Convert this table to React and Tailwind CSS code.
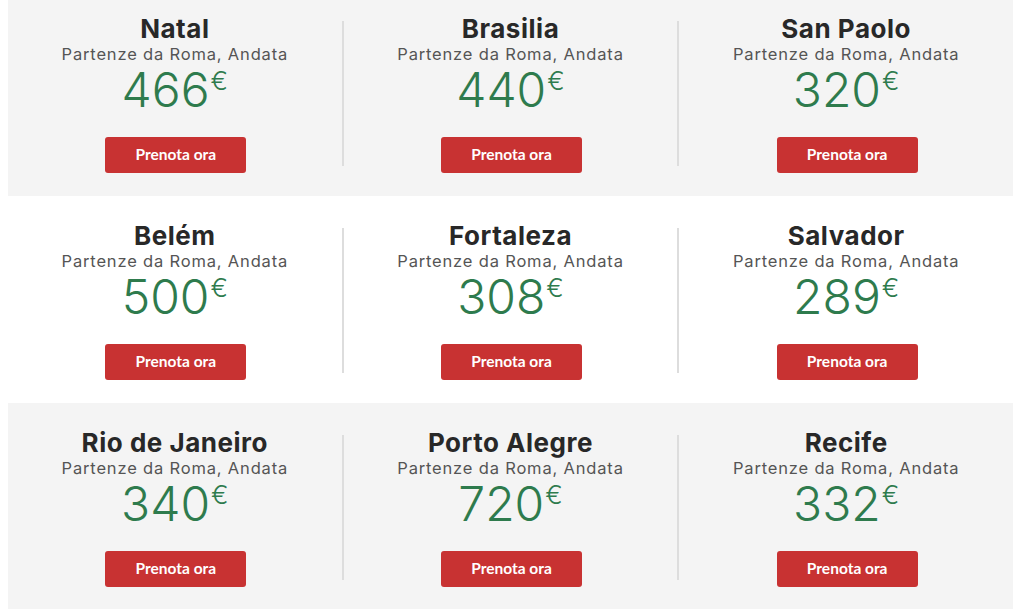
import React from 'react';

const rows = [
  { shade: true, items: [['Natal', '466'], ['Brasilia', '440'], ['San Paolo', '320']] },
  { shade: false, items: [['Belém', '500'], ['Fortaleza', '308'], ['Salvador', '289']] },
  { shade: true, items: [['Rio de Janeiro', '340'], ['Porto Alegre', '720'], ['Recife', '332']] },
];

const Offer = ({ city, price }) => (
  <div className="flex-1 flex flex-col items-center pt-[26px]">
    <h3 className="text-[26px] leading-[28px] font-bold tracking-[0.02em] text-[#282828]">{city}</h3>
    <p className="text-[16.5px] leading-[20px] mt-[1px] text-[#555] tracking-[0.05em]">Partenze da Roma, Andata</p>
    <div className="flex items-start mt-[2px] text-[#2e7b4d]">
      <span className="text-[48px] leading-[48px] font-light">{price}</span>
      <span className="text-[26px] leading-[26px] mt-[2px] ml-px font-light">€</span>
    </div>
    <button className="mt-[23px] ml-[2px] w-[141px] h-[36px] rounded-[3px] bg-[#c83232] text-white text-[15.5px] font-bold font-['Lato',sans-serif]">
      Prenota ora
    </button>
  </div>
);

const Separator = () => <div className="w-[2px] h-[145px] mt-[32px] shrink-0 bg-[#dddddd]" />;

export default function App() {
  return (
    <div className="w-[1024px] h-[609px] overflow-hidden bg-white font-['Inter',sans-serif]">
      <div className="-mt-[11px]">
        {rows.map((row, i) => (
          <div key={i} className={`mx-[8px] w-[1005px] h-[207px] flex ${row.shade ? 'bg-[#f4f4f4]' : 'bg-white'}`}>
            <Offer city={row.items[0][0]} price={row.items[0][1]} />
            <Separator />
            <Offer city={row.items[1][0]} price={row.items[1][1]} />
            <Separator />
            <Offer city={row.items[2][0]} price={row.items[2][1]} />
          </div>
        ))}
      </div>
    </div>
  );
}
